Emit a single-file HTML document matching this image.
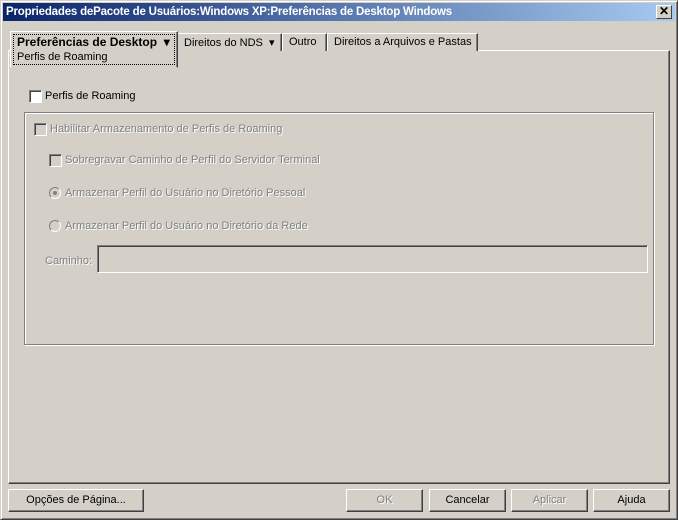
<!DOCTYPE html>
<html><head><style>
*{box-sizing:border-box}
body{margin:0;width:678px;height:520px;background:#d4d0c8;font-family:"Liberation Sans",sans-serif;font-size:11px;color:#000;position:relative;overflow:hidden}
.a{position:absolute;white-space:nowrap}
.win{left:0;top:0;width:678px;height:520px;border:1px solid;border-color:#d4d0c8 #404040 #404040 #d4d0c8;box-shadow:inset 1px 1px 0 #fff,inset -1px -1px 0 #808080}
.title{left:3px;top:3px;width:672px;height:18px;background:linear-gradient(to right,#0a246a,#a6caf0);color:#fff;font-weight:bold;font-size:11.5px;line-height:18px;padding-left:3px;letter-spacing:-0.2px}
.xb{left:656px;top:5px;width:16px;height:14px;background:#d4d0c8;border:1px solid;border-color:#fff #404040 #404040 #fff;font-size:12px;line-height:11px;text-align:center;color:#000;font-weight:bold}
.panel{left:8px;top:50px;width:662px;height:434px;border:1px solid;border-color:#fff #404040 #404040 #fff;box-shadow:inset -1px -1px 0 #808080}
.tab{top:33px;height:18px;border:1px solid;border-color:#fff #404040 transparent #fff;border-bottom:none;box-shadow:inset -1px 0 0 #808080;padding:2px 6px;background:#d4d0c8;white-space:nowrap}
.btn{top:489px;height:23px;border:1px solid;border-color:#fff #404040 #404040 #fff;box-shadow:inset -1px -1px 0 #808080;text-align:center;line-height:20px;background:#d4d0c8}
.dis{color:#808080;text-shadow:1px 1px 0 #fff}
.cb{width:13px;height:13px;border:1px solid;border-color:#808080 #fff #fff #808080;box-shadow:inset 1px 1px 0 #404040}
.group{left:24px;top:112px;width:630px;height:233px;border:1px solid #808080;box-shadow:1px 1px 0 #fff,inset 1px 1px 0 #fff}
.rb{width:12px;height:12px;border-radius:50%;border:1px solid;border-color:#808080 #fff #fff #808080}
</style></head><body>
<div class="a win"></div>
<div class="a title">Propriedades dePacote de Usuários:Windows XP:Preferências de Desktop Windows</div>
<div class="a xb">✕</div>
<div class="a panel"></div>
<div class="a tab" style="left:177px;width:105px">Direitos do NDS &nbsp;▾</div>
<div class="a tab" style="left:282px;width:45px">Outro</div>
<div class="a tab" style="left:327px;width:151px">Direitos a Arquivos e Pastas</div>
<div class="a" style="left:10px;top:31px;width:168px;height:37px;background:#d4d0c8;border:1px solid;border-color:#fff #404040 transparent #fff;box-shadow:inset -1px 0 0 #808080"></div>
<div class="a" style="left:13px;top:34px;width:162px;height:31px;border:1px dotted #000"></div>
<div class="a" style="left:17px;top:35px;font-weight:bold;font-size:12px">Preferências de Desktop &nbsp;▾</div>
<div class="a" style="left:17px;top:51px">Perfis de Roaming</div>
<div class="a cb" style="left:29px;top:90px;background:#fff"></div>
<div class="a" style="left:45px;top:90px">Perfis de Roaming</div>
<div class="a group"></div>
<div class="a cb" style="left:34px;top:123px"></div>
<div class="a dis" style="left:50px;top:123px">Habilitar Armazenamento de Perfis de Roaming</div>
<div class="a cb" style="left:49px;top:154px"></div>
<div class="a dis" style="left:65px;top:154px">Sobregravar Caminho de Perfil do Servidor Terminal</div>
<div class="a rb" style="left:49px;top:187px"><div class="a" style="left:3px;top:3px;width:4px;height:4px;border-radius:50%;background:#808080"></div></div>
<div class="a dis" style="left:65px;top:187px">Armazenar Perfil do Usuário no Diretório Pessoal</div>
<div class="a rb" style="left:49px;top:220px"></div>
<div class="a dis" style="left:65px;top:220px">Armazenar Perfil do Usuário no Diretório da Rede</div>
<div class="a dis" style="left:45px;top:255px">Caminho:</div>
<div class="a" style="left:97px;top:245px;width:551px;height:28px;border:1px solid;border-color:#808080 #fff #fff #808080;box-shadow:inset 1px 1px 0 #404040"></div>
<div class="a btn" style="left:8px;width:136px">Opções de Página...</div>
<div class="a btn dis" style="left:346px;width:77px">OK</div>
<div class="a btn" style="left:429px;width:77px">Cancelar</div>
<div class="a btn dis" style="left:511px;width:77px">Aplicar</div>
<div class="a btn" style="left:593px;width:77px">Ajuda</div>
</body></html>
